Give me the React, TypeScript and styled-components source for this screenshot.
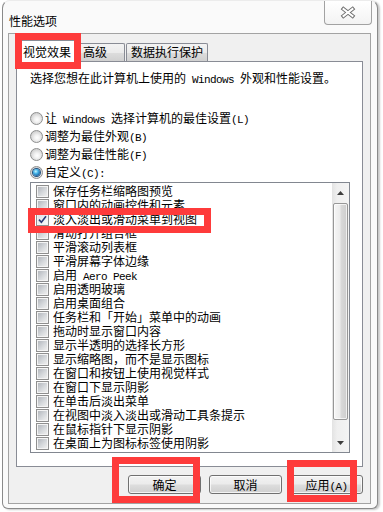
import React from 'react';
import styled, { createGlobalStyle } from 'styled-components';

const Global = createGlobalStyle`
  html, body { margin: 0; padding: 0; background: #ffffff; }
  body {
    font-family: "Noto Sans CJK SC", "Noto Sans", sans-serif;
    font-size: 12px;
    color: #000;
  }
  * { box-sizing: border-box; }
`;

const Page = styled.div`
  position: relative;
  width: 383px;
  height: 512px;
  overflow: hidden;
`;

const Window = styled.div`
  margin-left: 2px;
  width: 376px;
  height: 509px;
  border: 1px solid #8a8a8a;
  border-top-color: #ececec;
  border-radius: 8px 8px 6px 6px;
  background: #fafafa;
  box-shadow: 2px 1px 2px rgba(0, 0, 0, 0.22);
  display: flex;
  flex-direction: column;
  padding: 0 6px 4px 5px;
`;

const TitleBar = styled.div`
  height: 32px;
  flex: none;
  display: flex;
  align-items: flex-start;
  justify-content: space-between;
  margin-right: -1px;
`;

const Title = styled.div`
  margin: 13px 0 0 1px;
  height: 14px;
  line-height: 14px;
  white-space: nowrap;
`;

const CloseBtn = styled.div`
  width: 48px;
  height: 24px;
  border: 1px solid #a2a2a2;
  border-top: none;
  border-radius: 0 0 4px 4px;
  background: linear-gradient(#ffffff, #f3f3f3);
  display: flex;
  align-items: center;
  justify-content: center;
`;

const Client = styled.div`
  flex: 1;
  border: 1px solid #a3a3a3;
  background: #f0f0f0;
  padding: 0 7px;
  display: flex;
  flex-direction: column;
`;

const TabStrip = styled.div`
  height: 27px;
  flex: none;
  display: flex;
  align-items: flex-end;
  padding-left: 2px;
`;

const Tab = styled.div<{ $w: number; $active?: boolean; $gap?: number }>`
  width: ${p => p.$w}px;
  margin-left: ${p => p.$gap ?? 0}px;
  height: ${p => (p.$active ? 22 : 18)}px;
  margin-bottom: ${p => (p.$active ? -1 : 0)}px;
  position: relative;
  z-index: ${p => (p.$active ? 1 : 0)};
  border: 1px solid #898c95;
  border-bottom: none;
  border-radius: 2px 2px 0 0;
  background: ${p =>
    p.$active
      ? '#ffffff'
      : 'linear-gradient(#f3f3f3 0%, #ebebeb 50%, #dddddd 51%, #d0d0d0 100%)'};
  padding: ${p => (p.$active ? '4px' : '1px')} 0 0 4px;
  white-space: nowrap;
`;

const TabText = styled.span`
  display: block;
  height: 14px;
  line-height: 14px;
`;

const TabPanel = styled.div`
  height: 406px;
  flex: none;
  border: 1px solid #898c95;
  background: #ffffff;
  padding: 9px 13px 0 13px;
  display: flex;
  flex-direction: column;
`;

const Desc = styled.div`
  height: 14px;
  line-height: 14px;
  white-space: nowrap;
  margin-bottom: 24px;
`;

const RadioGroup = styled.div`
  display: flex;
  flex-direction: column;
`;

const RadioRow = styled.div`
  height: 18px;
  display: flex;
  align-items: center;
  gap: 2px;
  white-space: nowrap;
`;

const Label = styled.span`
  display: block;
  height: 14px;
  line-height: 14px;
  white-space: nowrap;
`;

const RadioDot = styled.span<{ $on?: boolean }>`
  width: 13px;
  height: 13px;
  flex: none;
  border-radius: 50%;
  border: 1px solid #8e8f8f;
  background: radial-gradient(circle at 55% 60%, #ffffff 0%, #f1f1f1 30%, #d2d2d2 70%, #c2c2c2 100%);
  display: flex;
  align-items: center;
  justify-content: center;
  &::after {
    content: '';
    width: 7px;
    height: 7px;
    border-radius: 50%;
    display: ${p => (p.$on ? 'block' : 'none')};
    background: radial-gradient(circle at 40% 35%, #c9f6ff 0%, #45b4e8 35%, #1b5f9e 75%, #0d3a6a 100%);
    box-shadow: 0 0 0 1px #24527f;
  }
`;

const ListBox = styled.div`
  margin-top: 1px;
  width: 320px;
  height: 271px;
  border: 1px solid #828790;
  background: #ffffff;
  display: flex;
`;

const Items = styled.div`
  flex: 1;
  padding-top: 1px;
  overflow: hidden;
`;

const Item = styled.div`
  height: 14px;
  display: flex;
  align-items: center;
  gap: 4px;
  padding-left: 5px;
  white-space: nowrap;
`;

const Check = styled.span`
  width: 13px;
  height: 13px;
  flex: none;
  border: 1px solid #8f8f8f;
  background: #f4f4f4;
  padding: 1px;
  display: flex;
`;

const CheckInner = styled.span<{ $on?: boolean }>`
  flex: 1;
  display: flex;
  align-items: center;
  justify-content: center;
  background: ${p =>
    p.$on
      ? 'linear-gradient(135deg, #dfe3e8 0%, #eef0f2 60%, #fbfbfb 100%)'
      : 'linear-gradient(135deg, #b3b7bd 0%, #d6d9dc 55%, #efefef 100%)'};
`;

const ScrollBar = styled.div`
  width: 17px;
  flex: none;
  display: flex;
  flex-direction: column;
  background: linear-gradient(to right, #e3e3e3 0%, #efefef 30%, #f4f4f4 100%);
`;

const ScrollBtn = styled.div<{ $h: number }>`
  height: ${p => p.$h}px;
  flex: none;
  display: flex;
  align-items: center;
  justify-content: center;
  margin: 0 1px;
`;

const Thumb = styled.div`
  height: 217px;
  flex: none;
  margin: 0 1px;
  border: 1px solid #979797;
  border-radius: 2px;
  background: linear-gradient(to right, #f6f6f6 0%, #ececec 45%, #d9d9d9 55%, #cdcdcd 100%);
  box-shadow: inset 0 0 0 1px rgba(255, 255, 255, 0.7);
`;

const Track = styled.div`
  flex: 1;
`;

const ButtonRow = styled.div`
  margin-top: 8px;
  display: flex;
  justify-content: flex-end;
  gap: 8px;
`;

const Btn = styled.button`
  width: 73px;
  height: 19px;
  padding: 0;
  border: 1px solid #707070;
  border-radius: 3px;
  background: linear-gradient(#f2f2f2 0%, #ebebeb 48%, #dddddd 52%, #cfcfcf 100%);
  box-shadow: inset 0 0 0 1px rgba(255, 255, 255, 0.75);
  font-family: inherit;
  font-size: 12px;
  line-height: 15px;
  color: #000;
  display: flex;
  align-items: center;
  justify-content: center;
`;

const Latin = styled.span`
  font-family: "Liberation Mono", monospace;
  font-size: 11px;
  letter-spacing: -0.6px;
  white-space: pre;
`;

const Annot = styled.div<{ $x: number; $y: number; $w: number; $h: number }>`
  position: absolute;
  left: ${p => p.$x}px;
  top: ${p => p.$y}px;
  width: ${p => p.$w}px;
  height: ${p => p.$h}px;
  border: 7px solid #fe3b3b;
  pointer-events: none;
  z-index: 5;
`;

function Txt({ s }: { s: string }) {
  const parts = s.split(/([\x20-\x7e]+)/);
  return (
    <>
      {parts.map((p, i) =>
        p === '' ? null : /[\x20-\x7e]/.test(p) ? (
          <Latin key={i}>{p}</Latin>
        ) : (
          <React.Fragment key={i}>{p}</React.Fragment>
        )
      )}
    </>
  );
}

const radios = [
  { label: '让 Windows 选择计算机的最佳设置(L)', on: false },
  { label: '调整为最佳外观(B)', on: false },
  { label: '调整为最佳性能(F)', on: false },
  { label: '自定义(C):', on: true },
];

const items = [
  '保存任务栏缩略图预览',
  '窗口内的动画控件和元素',
  '淡入淡出或滑动菜单到视图',
  '滑动打开组合框',
  '平滑滚动列表框',
  '平滑屏幕字体边缘',
  '启用 Aero Peek',
  '启用透明玻璃',
  '启用桌面组合',
  '任务栏和「开始」菜单中的动画',
  '拖动时显示窗口内容',
  '显示半透明的选择长方形',
  '显示缩略图，而不是显示图标',
  '在窗口和按钮上使用视觉样式',
  '在窗口下显示阴影',
  '在单击后淡出菜单',
  '在视图中淡入淡出或滑动工具条提示',
  '在鼠标指针下显示阴影',
  '在桌面上为图标标签使用阴影',
];

const CloseGlyph = () => (
  <svg width="16" height="13" viewBox="0 0 16 13">
    <path d="M3.5 3 L12.5 10 M12.5 3 L3.5 10" stroke="#6e6e6e" strokeWidth="4" strokeLinecap="square" fill="none" />
    <path d="M3.5 3 L12.5 10 M12.5 3 L3.5 10" stroke="#ffffff" strokeWidth="2" strokeLinecap="square" fill="none" />
  </svg>
);

const ArrowUp = () => (
  <svg width="7" height="4" viewBox="0 0 7 4">
    <polygon points="0,4 3.5,0 7,4" fill="#3d3d3d" />
  </svg>
);

const ArrowDown = () => (
  <svg width="7" height="4" viewBox="0 0 7 4">
    <polygon points="0,0 3.5,4 7,0" fill="#3d3d3d" />
  </svg>
);

const CheckMark = () => (
  <svg width="9" height="9" viewBox="0 0 9 9">
    <path d="M1 4.6 L3.4 7.2 L8 1.2" stroke="#2c3b78" strokeWidth="1.6" fill="none" />
  </svg>
);

export default function App() {
  return (
    <Page>
      <Global />
      <Window>
        <TitleBar>
          <Title>性能选项</Title>
          <CloseBtn>
            <CloseGlyph />
          </CloseBtn>
        </TitleBar>
        <Client>
          <TabStrip>
            <Tab $w={60} $active>
              <TabText>视觉效果</TabText>
            </Tab>
            <Tab $w={47}>
              <TabText>高级</TabText>
            </Tab>
            <Tab $w={82} $gap={1}>
              <TabText>数据执行保护</TabText>
            </Tab>
          </TabStrip>
          <TabPanel>
            <Desc>
              <Txt s="选择您想在此计算机上使用的 Windows 外观和性能设置。" />
            </Desc>
            <RadioGroup>
              {radios.map(r => (
                <RadioRow key={r.label}>
                  <RadioDot $on={r.on} />
                  <Label>
                    <Txt s={r.label} />
                  </Label>
                </RadioRow>
              ))}
            </RadioGroup>
            <ListBox>
              <Items>
                {items.map((it, i) => (
                  <Item key={it}>
                    <Check>
                      <CheckInner $on={i === 2}>{i === 2 && <CheckMark />}</CheckInner>
                    </Check>
                    <Label>
                      <Txt s={it} />
                    </Label>
                  </Item>
                ))}
              </Items>
              <ScrollBar>
                <ScrollBtn $h={20}>
                  <ArrowUp />
                </ScrollBtn>
                <Thumb />
                <Track />
                <ScrollBtn $h={18}>
                  <ArrowDown />
                </ScrollBtn>
              </ScrollBar>
            </ListBox>
          </TabPanel>
          <ButtonRow>
            <Btn>
              <Label>确定</Label>
            </Btn>
            <Btn>
              <Label>取消</Label>
            </Btn>
            <Btn>
              <Label>
                <Txt s="应用(A)" />
              </Label>
            </Btn>
          </ButtonRow>
        </Client>
      </Window>
      <Annot $x={15} $y={33} $w={66} $h={36} />
      <Annot $x={28} $y={208} $w={183} $h={25} />
      <Annot $x={112} $y={457} $w={88} $h={46} />
      <Annot $x={287} $y={460} $w={70} $h={42} />
    </Page>
  );
}
